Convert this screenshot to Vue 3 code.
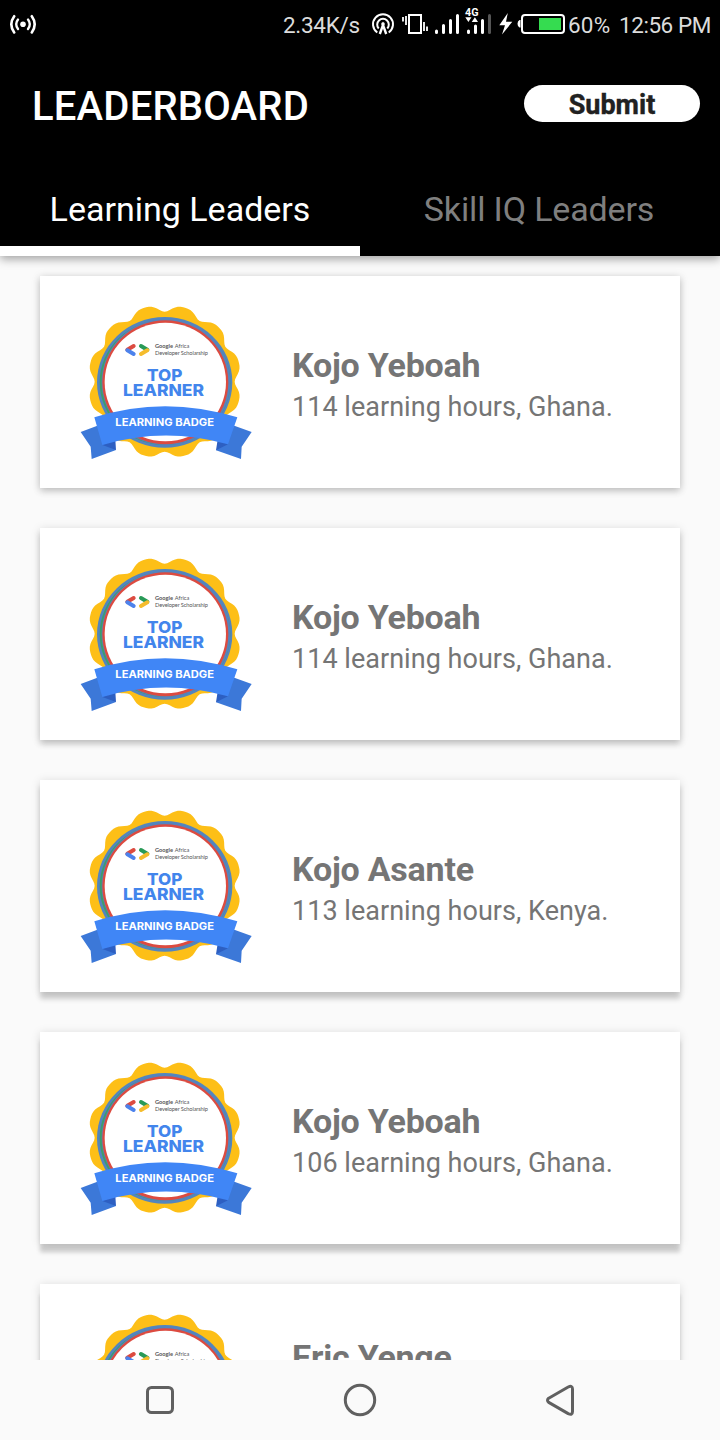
<script setup>
const leaders = [
  { name: 'Kojo Yeboah', detail: '114 learning hours, Ghana.' },
  { name: 'Kojo Yeboah', detail: '114 learning hours, Ghana.' },
  { name: 'Kojo Asante', detail: '113 learning hours, Kenya.' },
  { name: 'Kojo Yeboah', detail: '106 learning hours, Ghana.' },
  { name: 'Eric Yenge' },
]

const shadow = (i) => ({
  boxShadow: `0 ${3 + i * 1.9}px ${7 - i * 0.9}px rgba(0,0,0,.17), 0 1px 9px rgba(0,0,0,.13)`,
})

// Twelve-lobed seal outline.
const seal = (() => {
  const pts = []
  for (let d = 0; d < 360; d += 2) {
    const a = (d * Math.PI) / 180
    const r = 222 - 10 * Math.cos(12 * a) - 2 * Math.cos(24 * a)
    pts.push(`${(284 + r * Math.sin(a)).toFixed(1)} ${(260 - r * Math.cos(a)).toFixed(1)}`)
  }
  return `M${pts.join('L')}Z`
})()
</script>

<template>
  <div class="screen">
    <header class="top">
      <div class="status">
        <svg class="cast" width="28" height="24" viewBox="0 0 28 24" fill="none" stroke="#fff" stroke-linecap="round">
          <circle cx="14" cy="12.3" r="2.8" fill="#fff" stroke="none" />
          <path d="M9 7.6Q5.400 12.300 9 17M19 7.600Q22.600 12.300 19 17" stroke-width="2.400" />
          <path d="M5.200 4.200Q-.6 12.300 5.200 20.400M22.800 4.200Q28.600 12.300 22.800 20.400" stroke-width="2.600" />
        </svg>
        <span class="speed">2.34K/s</span>
        <svg class="indicators" width="198" height="40" viewBox="0 0 198 40" fill="none" stroke="#fff">
          <g stroke-width="2">
            <path d="M7.300 32.500A10 10 0 1 1 18.700 32.500" />
            <path d="M8.700 28.500A5.800 5.800 0 1 1 17.300 28.500" />
            <path d="M9.800 34L13 25L16.200 34" stroke-width="2.400" />
            <circle cx="13" cy="24" r="1.800" fill="#fff" stroke="none" />
          </g>
          <rect x="39" y="15" width="12" height="18" stroke-width="2" />
          <path d="M33 17v4.500M36 16v9M54 22v9M57 26.500v4.500" stroke-width="1.800" />
          <g stroke-width="3" stroke-linecap="round">
            <path d="M66.500 31v1.500M73.500 25.500v7M80.500 20.500v12M87.500 15.500v17M98.500 31v1.500M105.500 26v6.500M112.500 20.500v12" />
            <path d="M119.500 15.500v17" stroke="#555" />
          </g>
          <path d="M95.300 17.300h6.200l-3.100 4.700zM101.700 22h6.300l-3.100-4.700z" fill="#fff" stroke="none" />
          <text x="95" y="16.300" class="net" textLength="13.500" lengthAdjust="spacingAndGlyphs">4G</text>
          <path d="M137.800 13L129.300 25.300H135L132 34.500L142.300 21.800H136z" fill="#fff" stroke="none" />
          <path d="M150.500 20h-1q-2 1-2 3.800t2 3.800h1z" fill="#fff" stroke="none" />
          <rect x="152" y="15" width="42" height="18" rx="3" stroke-width="2" />
          <rect x="169" y="18" width="22" height="12" fill="#35dc50" stroke="none" />
        </svg>
        <span class="percent">60%</span>
        <span class="clock">12:56 PM</span>
      </div>
      <div class="bar">
        <h1>LEADERBOARD</h1>
        <button type="button">Submit</button>
      </div>
      <nav class="tabs">
        <a class="tab active">Learning Leaders</a>
        <a class="tab iq">Skill IQ Leaders</a>
      </nav>
    </header>

    <main class="list">
      <article v-for="(p, i) in leaders" :key="i" class="card" :style="shadow(i)">
        <svg class="badge" width="190" height="175" viewBox="0 0 570 525">
          <path :d="seal" fill="#fdbf17" />
          <ellipse cx="284" cy="262" rx="203" ry="196" fill="#5385bf" />
          <ellipse cx="285" cy="262" rx="196" ry="188" fill="#3e9d6c" />
          <ellipse cx="288" cy="261" rx="193" ry="189" fill="#5385bf" />
          <ellipse cx="286" cy="262" rx="189" ry="186" fill="#dc4b40" />
          <ellipse cx="286" cy="261" rx="182" ry="178" fill="#fff" />
          <g fill="none" stroke-width="12" stroke-linecap="round">
            <path d="M172 164L191 153" stroke="#dc4b40" />
            <path d="M172 166L191 177" stroke="#4c82ec" />
            <path d="M213 153L232 164" stroke="#289a57" />
            <path d="M232 166L213 177" stroke="#f5bc2c" />
          </g>
          <text class="tiny strong" x="255" y="159" textLength="54">Google</text>
          <text class="tiny" x="314" y="159" textLength="44">Africa</text>
          <text class="tiny" x="255" y="179" textLength="159">Developer Scholarship</text>
          <g class="title">
            <text x="231" y="259" textLength="106" lengthAdjust="spacingAndGlyphs">TOP</text>
            <text x="159" y="303" textLength="243" lengthAdjust="spacingAndGlyphs">LEARNER</text>
          </g>
          <path d="M32 411L82 392L138 465L65 492L62 455ZM545 411L493 392L438 466L513 492L515 455Z" fill="#3c78d8" />
          <path d="M97 450L136 434L138 465ZM474 448L443 434L438 466Z" fill="#2d5fc2" />
          <path d="M73 367Q284 300 502 367L474 448Q284 394 97 450Z" fill="#4086f6" />
          <text class="ribbon" x="136" y="392" textLength="296" lengthAdjust="spacingAndGlyphs">LEARNING BADGE</text>
        </svg>
        <div class="info" :class="{ raised: !p.detail }">
          <h2>{{ p.name }}</h2>
          <p v-if="p.detail">{{ p.detail }}</p>
        </div>
      </article>
    </main>

    <footer class="system">
      <svg width="36" height="36" viewBox="0 0 36 36"><rect x="5.500" y="5.500" width="25" height="25" rx="4" /></svg>
      <svg width="36" height="36" viewBox="0 0 36 36"><circle cx="18" cy="18" r="14.700" /></svg>
      <svg width="36" height="36" viewBox="0 0 36 36"><path d="M6.700 16.200L26.200 5Q30.500 3 30.500 7V29.600Q30.500 33.600 26.200 31.600L6.700 20.400Q4.300 18.300 6.700 16.200Z" /></svg>
    </footer>
  </div>
</template>

<style>
body {
  margin: 0;
}
</style>

<style scoped>
.screen {
  width: 720px;
  height: 1440px;
  display: flex;
  flex-direction: column;
  overflow: hidden;
  background: #fafafa;
  font-family: Roboto, "Liberation Sans", sans-serif;
}
.top {
  flex: none;
  z-index: 1;
  height: 256px;
  display: flex;
  flex-direction: column;
  background: #000;
  color: #fff;
  box-shadow: 0 3px 9px rgba(0, 0, 0, .36);
}
.status {
  height: 48px;
  display: flex;
  align-items: flex-start;
  color: #dcdcdc;
  font-size: 22.5px;
  line-height: 51px;
  white-space: nowrap;
}
.cast {
  margin: 12px auto 0 9px;
}
.indicators {
  flex: none;
}
.speed {
  width: 87px;
  letter-spacing: -.3px;
}
.percent {
  width: 51px;
  letter-spacing: .2px;
}
.clock {
  width: 101px;
  letter-spacing: -.45px;
}
.net {
  font: 700 10px Roboto, sans-serif;
  fill: #fff;
  stroke: none;
}
.bar {
  height: 112px;
  display: flex;
  align-items: center;
  justify-content: space-between;
  padding: 0 20px 0 32px;
}
h1 {
  margin: 6px 0 0;
  font-size: 40px;
  font-weight: 500;
  line-height: 48px;
  letter-spacing: .2px;
}
button {
  width: 176px;
  height: 37px;
  margin: 0 0 1px;
  padding: 3px 0 0;
  border: 0;
  border-radius: 19px;
  background: #fff;
  color: #212121;
  font: 700 27px/34px Roboto, sans-serif;
  -webkit-text-stroke: .4px #212121;
}
.tabs {
  flex: 1;
  display: flex;
}
.tab {
  box-sizing: border-box;
  width: 360px;
  display: flex;
  align-items: center;
  justify-content: center;
  border-bottom: 10px solid transparent;
  padding-top: 11px;
  font-size: 34px;
  line-height: 40px;
  color: #7f7f7f;
}
.tab.active {
  color: #fff;
  border-color: #fff;
}
.tab.iq {
  letter-spacing: -.15px;
  padding-right: 2px;
}
.list {
  flex: 1;
  min-height: 0;
  overflow: hidden;
  display: flex;
  flex-direction: column;
  gap: 40px;
  padding: 20px 40px 0;
}
.card {
  flex: none;
  height: 212px;
  display: flex;
  background: #fff;
}
.badge {
  margin: 19px 32px 0 30px;
}
.info {
  padding-top: 69px;
  color: #757575;
  white-space: nowrap;
}
.info.raised {
  padding-top: 53px;
}
h2 {
  margin: 0;
  font-size: 34px;
  line-height: 40px;
  font-weight: 700;
  letter-spacing: -.22px;
}
.info p {
  margin: 5px 0 0;
  font-size: 27px;
  line-height: 34px;
  letter-spacing: .03px;
}
.tiny {
  font-family: Lato, sans-serif;
  font-size: 17px;
  fill: #555;
}
.tiny.strong {
  font-weight: 700;
}
.title {
  font: 800 48px Inter, sans-serif;
  fill: #4285ec;
}
.ribbon {
  font: 700 31px Inter, sans-serif;
  fill: #fff;
}
.system {
  flex: none;
  height: 80px;
  display: flex;
  align-items: center;
  justify-content: center;
  gap: 164px;
  background: #fafafa;
}
.system svg {
  fill: none;
  stroke: #606060;
  stroke-width: 3;
  stroke-linejoin: round;
}
</style>
